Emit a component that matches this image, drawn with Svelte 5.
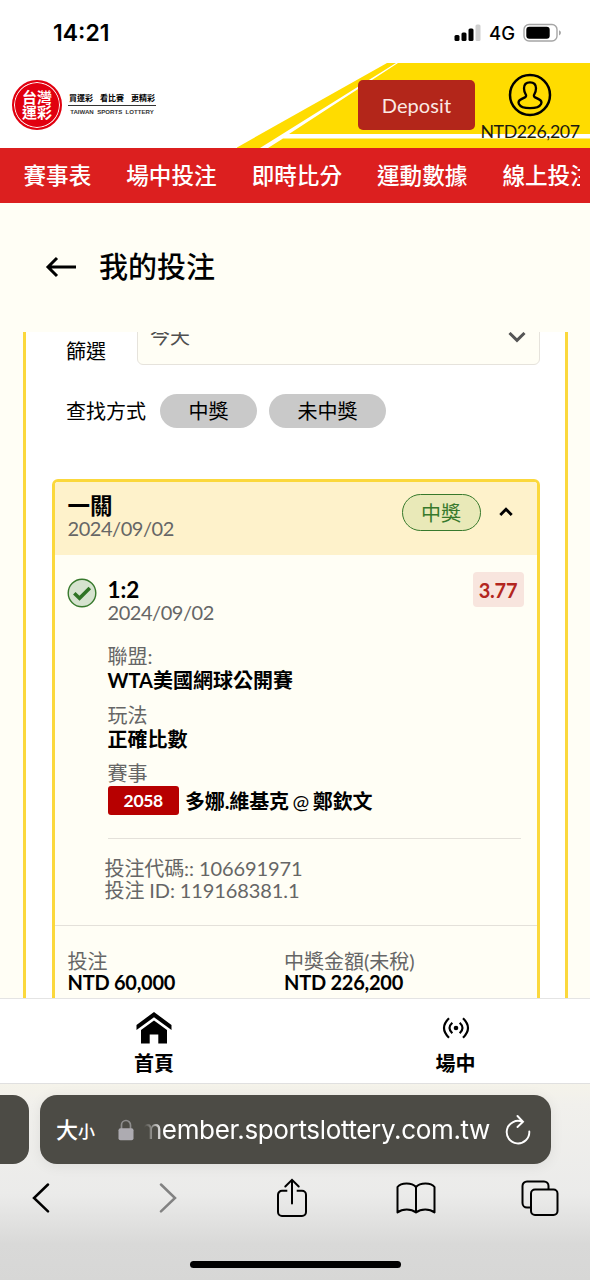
<script lang="ts">
	const navItems = ['賽事表', '場中投注', '即時比分', '運動數據', '線上投注'];
	const filters = ['中獎', '未中獎'];
	const details = [
		{ label: '聯盟:', value: 'WTA美國網球公開賽' },
		{ label: '玩法', value: '正確比數' }
	];
	const totals = [
		{ label: '投注', value: 'NTD 60,000' },
		{ label: '中獎金額(未稅)', value: 'NTD 226,200' }
	];
</script>

<div class="screen">
	<div class="status">
		<span class="time">14:21</span>
		<div class="indicators">
			<svg width="27" height="18" viewBox="0 0 27 18">
				<rect x="0.5" y="11" width="5" height="6" rx="1.5" />
				<rect x="7.5" y="8.5" width="5" height="8.5" rx="1.5" />
				<rect x="14.5" y="4.5" width="5" height="12.5" rx="1.5" />
				<rect x="21.5" y="0.5" width="5" height="16.5" rx="1.5" fill="#cfcfcf" />
			</svg>
			<span class="network">4G</span>
			<svg width="39" height="20" viewBox="0 0 39 20">
				<rect x="1" y="1.5" width="33" height="16.5" rx="5" fill="none" stroke="#a5a5a5" stroke-width="1.4" />
				<rect x="3.3" y="3.8" width="23.4" height="12" rx="3" />
				<path d="M36 7.2q2 .8 2 2.6t-2 2.6z" fill="#a5a5a5" />
			</svg>
		</div>
	</div>

	<header>
		<svg class="stripes" width="353" height="85" viewBox="238 63 353 85">
			<path d="M388 63H591V148H237z" fill="#ffdc00" />
			<path d="M397 63H399L290 134H591V138.400H284L269 148H261z" fill="#fff" />
		</svg>
		<div class="logo">
			<div class="seal"><span>台灣</span><span>運彩</span></div>
			<div class="slogan">
				<div class="zh"><span>買運彩</span><span>看比賽</span><span>更精彩</span></div>
				<div class="en">TAIWAN&nbsp; SPORTS&nbsp; LOTTERY</div>
			</div>
		</div>
		<button class="deposit">Deposit</button>
		<div class="account">
			<svg width="44" height="44" viewBox="0 0 44 44" fill="none" stroke="#000" stroke-width="2.500">
				<circle cx="22" cy="22" r="20" />
				<path
					stroke-width="2.300"
					stroke-linejoin="round"
					d="M22 9.300c-4 0-6 2.500-6 6 0 2.500.4 4 1.700 6 .8 1.300.5 2.400-.8 3.100l-3.500 1.700c-2.400 1.200-3.400 2.900-2.500 4.800 1.400 2.800 6 4.200 11.100 4.200s9.700-1.400 11.100-4.200c.9-1.900-.1-3.600-2.500-4.800l-3.500-1.700c-1.300-.7-1.600-1.800-.8-3.100 1.300-2 1.700-3.500 1.700-6 0-3.500-2-6-6-6z"
				/>
			</svg>
			<span>NTD226,207</span>
		</div>
	</header>

	<nav>
		<div class="nav-scroll">
			{#each navItems as item}
				<span>{item}</span>
			{/each}
		</div>
	</nav>

	<div class="title">
		<svg width="32" height="22" viewBox="0 0 32 22" fill="none" stroke="#000" stroke-width="3">
			<path d="M31 11H3M12 2L3 11l9 9" />
		</svg>
		<h1>我的投注</h1>
	</div>

	<main>
		<section class="panel">
			<div class="row select-row">
				<span class="label">篩選</span>
				<div class="select">
					<span>今天</span>
					<svg width="18" height="12" viewBox="0 0 18 12" fill="none" stroke="#555" stroke-width="3">
						<path d="M1.500 2L9 9.300 16.500 2" />
					</svg>
				</div>
			</div>
			<div class="row filter-row">
				<span class="label">查找方式</span>
				{#each filters as filter}
					<button class="chip">{filter}</button>
				{/each}
			</div>

			<article class="card">
				<div class="card-head">
					<div class="heading">
						<strong>一關</strong>
						<span class="date">2024/09/02</span>
					</div>
					<span class="won">中獎</span>
					<svg width="14" height="10" viewBox="0 0 14 10" fill="none" stroke="#000" stroke-width="2.800">
						<path d="M1.300 8L7 2.200 12.700 8" />
					</svg>
				</div>

				<div class="bet">
					<svg class="check" width="30" height="30" viewBox="0 0 30 30">
						<circle cx="15" cy="15" r="13.800" fill="#d6e3cf" stroke="#37792c" stroke-width="1.400" />
						<path d="M7.300 15.200l5.200 5 10.300-10.300" fill="none" stroke="#2f7425" stroke-width="3.600" />
					</svg>
					<div class="info">
						<div class="pick">
							<div class="heading">
								<strong>1:2</strong>
								<span class="date">2024/09/02</span>
							</div>
							<span class="odds">3.77</span>
						</div>
						{#each details as d}
							<div class="detail">
								<span>{d.label}</span>
								<strong>{d.value}</strong>
							</div>
						{/each}
						<div class="detail">
							<span>賽事</span>
							<div class="match">
								<span class="code">2058</span>
								<strong>多娜.維基克 <em>@</em> 鄭欽文</strong>
							</div>
						</div>
						<div class="ids">
							<span>投注代碼:: 106691971</span>
							<span>投注 ID: 119168381.1</span>
						</div>
					</div>
				</div>

				<div class="totals">
					{#each totals as t}
						<div class="total">
							<span>{t.label}</span>
							<strong>{t.value}</strong>
						</div>
					{/each}
				</div>
			</article>
		</section>
	</main>

	<div class="tabbar">
		<div class="tab">
			<svg width="36" height="32" viewBox="0 0 36 32">
				<path d="M18 0L0.500 13v5L18 5.300 35.500 18v-5z" />
				<path d="M18 8.500L5 18v13.500h8.700v-9h8.600v9H31V18z" />
			</svg>
			<span>首頁</span>
		</div>
		<div class="tab">
			<svg width="28" height="32" viewBox="0 0 28 32" fill="none" stroke="#000" stroke-width="2.200">
				<circle cx="14" cy="16" r="2.300" fill="#000" stroke="none" />
				<path d="M10.300 10.800q-5.600 5.200 0 10.400M17.700 10.800q5.600 5.200 0 10.400M7 6.300q-10 9.700 0 19.400M21 6.300q10 9.700 0 19.400" />
			</svg>
			<span>場中</span>
		</div>
	</div>

	<footer>
		<div class="urls">
			<div class="prev-tab"></div>
			<div class="url">
				<span class="size">大<small>小</small></span>
				<svg width="16" height="22" viewBox="0 0 16 22">
					<path d="M3.500 10V6a4.500 4.500 0 0 1 9 0v4" fill="none" stroke="#8e8d8d" stroke-width="1.700" />
					<rect x="0.500" y="9.300" width="15" height="12" rx="2" fill="#adabb1" />
				</svg>
				<div class="host"><span>member.sportslottery.com.tw</span></div>
				<svg width="26" height="32" viewBox="0 0 26 32" fill="none" stroke="#fff" stroke-width="1.900" stroke-linecap="round">
					<path d="M17.500 7.800A11.300 11.300 0 1 0 24.300 17.500M12.500 2l5.500 5.800-5.500 5.200" />
				</svg>
			</div>
		</div>
		<div class="tools">
			<span>
				<svg width="18" height="30" viewBox="0 0 18 30" fill="none" stroke="#000" stroke-width="2.500" stroke-linecap="round">
					<path d="M16 1.500L2 15l14 13.300" />
				</svg>
			</span>
			<span>
				<svg width="18" height="30" viewBox="0 0 18 30" fill="none" stroke="#828282" stroke-width="2.500" stroke-linecap="round">
					<path d="M2 1.500L16 15 2 28.300" />
				</svg>
			</span>
			<span>
				<svg width="30" height="40" viewBox="0 0 30 40" fill="none" stroke="#000" stroke-width="2">
					<path d="M10.300 12.800H5a4 4 0 0 0-4 4V34a4 4 0 0 0 4 4h20a4 4 0 0 0 4-4V16.800a4 4 0 0 0-4-4h-5.300" />
					<path d="M15 25.500V2M8.300 8.500L15 1.800l6.700 6.700" stroke-linecap="round" />
				</svg>
			</span>
			<span>
				<svg width="40" height="32" viewBox="0 0 40 32" fill="none" stroke="#000" stroke-width="2" stroke-linejoin="round">
					<path d="M20 5C16 .300 5 .300 1.500 5v25.500c5-4 13.500-4 18.500 0 5-4 13.500-4 18.500 0V5C35 .300 24 .300 20 5zv25.500" />
				</svg>
			</span>
			<span>
				<svg width="38" height="36" viewBox="0 0 38 36" fill="none" stroke="#000" stroke-width="2">
					<path d="M9.500 27.500H6a4.500 4.500 0 0 1-4.500-4.500V6A4.500 4.500 0 0 1 6 1.500h17A4.500 4.500 0 0 1 27.500 6v3.500" />
					<rect x="10" y="9.500" width="26.500" height="25.500" rx="4" />
				</svg>
			</span>
		</div>
		<div class="home-bar"></div>
	</footer>
</div>

<style>
	:global(body) {
		margin: 0;
		background: #fff;
	}
	.screen {
		width: 590px;
		height: 1280px;
		display: flex;
		flex-direction: column;
		overflow: hidden;
		background: #fffef5;
		color: #000;
		font-family: Lato, 'Noto Sans CJK TC', sans-serif;
		font-size: 20px;
	}
	svg {
		display: block;
		flex: none;
	}
	button {
		border: none;
		padding: 0;
		font: inherit;
	}
	strong {
		font-weight: 700;
	}

	.status {
		height: 63px;
		flex: none;
		display: flex;
		justify-content: space-between;
		box-sizing: border-box;
		padding: 20px 28px 0 53px;
		background: #fff;
		font-family: Inter, sans-serif;
	}
	.time {
		font-size: 23px;
		font-weight: 600;
		line-height: 26px;
	}
	.indicators {
		display: flex;
		align-items: center;
		height: 26px;
	}
	.network {
		margin: 0 8px;
		font-size: 18.500px;
		font-weight: 500;
		line-height: 26px;
	}

	header {
		position: relative;
		height: 84.500px;
		flex: none;
		display: flex;
		background: #fff;
	}
	.stripes {
		position: absolute;
		right: 0;
		top: 0;
	}
	.logo {
		display: flex;
		flex: 1;
		padding: 17px 0 0 12px;
	}
	.seal {
		width: 50px;
		height: 50px;
		box-sizing: border-box;
		display: flex;
		flex-direction: column;
		align-items: center;
		justify-content: center;
		border: 2px solid #e1000f;
		border-radius: 50%;
		background: #e1000f;
		box-shadow: inset 0 0 0 1px #fff;
		color: #fff;
		font-size: 15px;
		font-weight: 700;
		line-height: 15.500px;
	}
	.slogan {
		margin: 12px 0 0 6px;
		width: 88px;
	}
	.zh {
		display: flex;
		justify-content: space-between;
		padding: 0 1px;
		height: 13px;
		border-bottom: 1px solid #333;
		font-size: 8px;
		font-weight: 700;
		line-height: 13px;
	}
	.en {
		font-family: 'Liberation Sans', sans-serif;
		font-size: 6.100px;
		font-weight: 700;
		line-height: 11px;
		color: #333;
		text-align: center;
		white-space: nowrap;
	}
	.deposit {
		position: relative;
		width: 117px;
		height: 50px;
		margin-top: 17px;
		border-radius: 5px;
		background: #b3261a;
		color: #fbe9e4;
		font-size: 20px;
		letter-spacing: 0.1px;
		line-height: 50px;
	}
	.account {
		position: relative;
		width: 110px;
		display: flex;
		flex-direction: column;
		align-items: center;
		padding: 10px 5px 0 0;
	}
	.account span {
		margin-top: 5px;
		font-size: 17.800px;
		letter-spacing: -0.450px;
		line-height: 18px;
		color: #1b1a10;
	}

	nav {
		height: 55.500px;
		flex: none;
		padding: 0 10px 0 23.500px;
		background: #dc1f1f;
	}
	.nav-scroll {
		display: flex;
		gap: 35px;
		overflow: hidden;
		color: #fff;
		font-size: 22.600px;
		font-weight: 500;
		line-height: 55px;
		white-space: nowrap;
	}

	.title {
		height: 128px;
		flex: none;
		display: flex;
		align-items: center;
		gap: 22px;
		padding: 0 0 1px 45px;
	}
	h1 {
		margin: 0;
		font-size: 29px;
		font-weight: 500;
		line-height: 40px;
	}

	main {
		height: 666px;
		flex: none;
		overflow: hidden;
		padding: 0 22px 0 23px;
	}
	.panel {
		border: 3px solid #fbd83c;
		border-width: 0 3px;
		background: #fff;
		padding: 0 25.500px 40px 26px;
	}
	.row {
		display: flex;
		align-items: center;
		padding-left: 14px;
	}
	.select-row {
		align-items: flex-start;
		height: 61px;
	}
	.select-row .label {
		width: 71px;
		padding-top: 7px;
		line-height: 24px;
	}
	.select {
		flex: 1;
		display: flex;
		align-items: flex-start;
		justify-content: space-between;
		box-sizing: border-box;
		height: 63px;
		margin-top: -30px;
		padding: 22px 13px 0 12px;
		border: 1.500px solid #e6e3dc;
		border-radius: 6px;
		background: #fffef5;
		line-height: 23px;
		color: #4f4f4f;
	}
	.select svg {
		margin-top: 6px;
	}
	.filter-row {
		height: 35px;
		line-height: 34px;
		gap: 12px;
	}
	.filter-row .label {
		margin-right: 2px;
	}
	.chip {
		height: 34px;
		padding: 0 28.500px;
		border-radius: 17px;
		background: #c9c9c9;
		color: #000;
		line-height: 34px;
	}

	.card {
		margin-top: 51px;
		border: 3px solid #fbd83c;
		border-radius: 6px;
		background: #fffef5;
		overflow: hidden;
	}
	.heading {
		flex: 1;
		display: flex;
		flex-direction: column;
	}
	.heading strong {
		font-size: 22.500px;
		line-height: 24px;
	}
	.date {
		line-height: 21px;
		letter-spacing: -0.450px;
		color: #666;
	}
	.card-head {
		height: 73px;
		box-sizing: border-box;
		display: flex;
		padding: 12px 24px 0 12.500px;
		background: #fef2cb;
	}
	.won {
		width: 77px;
		height: 35px;
		border: 1.500px solid #37792c;
		border-radius: 19px;
		background: #e9e9b8;
		color: #37792c;
		line-height: 37px;
		text-align: center;
	}
	.card-head svg {
		margin: 13px 0 0 18px;
	}
	.bet {
		display: flex;
		padding: 23px 13px 0 11.500px;
	}
	.check {
		margin-right: 11px;
	}
	.info {
		flex: 1;
	}
	.pick {
		display: flex;
		height: 66px;
	}
	.odds {
		width: 51px;
		height: 35px;
		margin-top: -6px;
		border-radius: 4px;
		background: #f8e5de;
		color: #b3261e;
		font-weight: 700;
		letter-spacing: -0.200px;
		line-height: 36px;
		text-align: center;
	}
	.detail {
		display: flex;
		flex-direction: column;
		margin-bottom: 9.500px;
		line-height: 24px;
		color: #666;
	}
	.detail strong {
		line-height: 25px;
		color: #000;
	}
	.match {
		display: flex;
		align-items: center;
		gap: 6px;
		padding-top: 1px;
	}
	.detail .match strong {
		line-height: 30px;
		height: 29px;
		letter-spacing: -0.150px;
		word-spacing: -1px;
	}
	em {
		font-style: normal;
		font-weight: 400;
	}
	.code {
		width: 71.500px;
		border-radius: 3px;
		background: #b70000;
		color: #fff;
		font-size: 17.500px;
		font-weight: 700;
		letter-spacing: -0.300px;
		line-height: 29px;
		text-align: center;
	}
	.ids {
		display: flex;
		flex-direction: column;
		margin: 23px 3px 0 0;
		padding: 19px 0 23.500px;
		border-top: 1.500px solid #e4e1da;
		color: #666;
		letter-spacing: -0.100px;
		line-height: 21.500px;
	}
	.ids span {
		margin-left: -3px;
	}
	.totals {
		display: flex;
		padding: 24px 12.500px 20px;
		border-top: 1.500px solid #e4e1da;
	}
	.total {
		width: 216.500px;
		display: flex;
		flex-direction: column;
		line-height: 23px;
		color: #666;
	}
	.total strong {
		color: #000;
		letter-spacing: -0.250px;
		line-height: 19px;
	}

	.tabbar {
		height: 86px;
		flex: none;
		box-sizing: border-box;
		display: flex;
		border-top: 1px solid #e4e4e4;
		border-bottom: 1px solid #e0e0e0;
		background: #fff;
	}
	.tab {
		width: 308px;
		flex: none;
		display: flex;
		flex-direction: column;
		align-items: center;
		gap: 7px;
		padding-top: 13px;
		box-sizing: border-box;
		font-weight: 700;
		line-height: 24px;
	}
	.tab + .tab {
		width: 295px;
	}

	footer {
		height: 197px;
		flex: none;
		background: linear-gradient(#f5f3ea 0, #f1f0ec 20px, #ebebea 110px, #d9d9d8 160px, #d7d7d6);
	}
	.urls {
		display: flex;
		gap: 11px;
		padding-top: 11px;
	}
	.prev-tab {
		width: 29px;
		height: 69px;
		border-radius: 0 16px 16px 0;
		background: #4c4b45;
	}
	.url {
		width: 511px;
		height: 69px;
		box-sizing: border-box;
		display: flex;
		align-items: center;
		padding: 0 20px 0 16px;
		border-radius: 17px;
		background: #4c4b45;
		box-shadow: 0 2px 14px rgb(0 0 0 / 0.07);
		color: #fff;
	}
	.size {
		width: 62px;
		padding-bottom: 3px;
		font-size: 22px;
		font-weight: 500;
		white-space: nowrap;
	}
	small {
		font-size: 17px;
	}
	.host {
		flex: 1;
		display: flex;
		justify-content: flex-end;
		overflow: hidden;
		margin: 0 15px 0 10px;
		font-family: Inter, sans-serif;
		font-size: 26px;
		letter-spacing: -0.350px;
		line-height: 40px;
		-webkit-mask-image: linear-gradient(90deg, transparent, #000 20px);
		mask-image: linear-gradient(90deg, transparent, #000 20px);
	}
	.tools {
		display: flex;
		align-items: center;
		justify-content: space-between;
		height: 40px;
		padding: 14px 20px 0 11px;
	}
	.tools span {
		width: 60px;
		display: flex;
		justify-content: center;
	}
	.tools span:first-child {
		margin-right: 3px;
	}
	.home-bar {
		width: 211px;
		height: 7px;
		margin: 43px auto 0;
		border-radius: 4px;
		background: #000;
	}
</style>
